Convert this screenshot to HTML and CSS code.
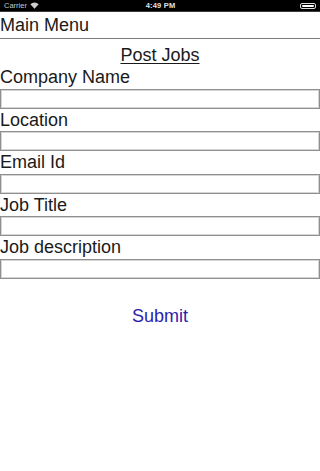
FILE: index.html
```html
<!DOCTYPE html>
<html>
<head>
<meta charset="utf-8">
<meta name="viewport" content="width=device-width, initial-scale=1">
<link rel="stylesheet" href="styles.css">
</head>
<body>
<div class="status">
  <div class="status-left">
    <span class="carrier">Carrier</span>
    <svg class="wifi" width="9" height="7" viewBox="0 0 9 7">
      <path d="M4.5 6.8 L0.3 2.3 A6 6 0 0 1 8.7 2.3 Z" fill="#cfcfcf"/>
    </svg>
  </div>
  <div class="status-time">4:49 PM</div>
  <div class="status-right">
    <div class="battery"><div class="battery-fill"></div></div>
  </div>
</div>
<div class="header">Main Menu</div>
<div class="title"><span class="title-link">Post Jobs</span></div>
<form class="form">
  <div class="field"><label class="label">Company Name</label><input class="input" type="text"></div>
  <div class="field"><label class="label">Location</label><input class="input" type="text"></div>
  <div class="field"><label class="label">Email Id</label><input class="input" type="text"></div>
  <div class="field"><label class="label">Job Title</label><input class="input" type="text"></div>
  <div class="field"><label class="label">Job description</label><input class="input" type="text"></div>
  <div class="submit-row"><span class="submit">Submit</span></div>
</form>
</body>
</html>
```
FILE: styles.css
```css
html, body {
  margin: 0;
  padding: 0;
  background: #ffffff;
  font-family: "Liberation Sans", Arial, sans-serif;
  color: #1a1a1a;
}
.status {
  height: 12px;
  background: #000000;
  display: flex;
  align-items: center;
  justify-content: space-between;
  padding: 0 3px 0 4px;
  font-size: 7.5px;
  line-height: 12px;
  border-bottom: 1px solid #3a3a3a;
  box-sizing: border-box;
}
.status-left {
  display: flex;
  align-items: center;
  gap: 3px;
  width: 60px;
}
.carrier {
  color: #c8c8c8;
}
.wifi {
  display: block;
}
.status-time {
  color: #e0e0e0;
  font-weight: bold;
  font-size: 7.5px;
  letter-spacing: 0.2px;
}
.status-right {
  width: 60px;
  display: flex;
  justify-content: flex-end;
}
.battery {
  width: 16px;
  height: 6px;
  border: 1px solid #dcdcdc;
  border-radius: 2px;
  box-sizing: border-box;
  padding: 1px;
  margin-right: 1px;
}
.battery-fill {
  width: 100%;
  height: 100%;
  background: #ffffff;
  border-radius: 1px;
}
.header {
  font-size: 18px;
  line-height: 20px;
  padding: 3px 0 3px 0;
  border-bottom: 1px solid #7a7a7a;
}
.title {
  margin-top: 5px;
  text-align: center;
  font-size: 18px;
  line-height: 22px;
}
.title-link {
  text-decoration: underline;
  text-underline-offset: 2px;
  text-decoration-thickness: 1px;
}
.form {
  display: flex;
  flex-direction: column;
  margin: 0;
}
.field {
  display: flex;
  flex-direction: column;
  height: 42.5px;
}
.label {
  font-size: 18px;
  line-height: 22.5px;
  height: 22.5px;
}
.input {
  display: block;
  box-sizing: border-box;
  width: 100%;
  height: 20px;
  margin: 0;
  padding: 0;
  border: 1px solid #8f8f8f;
  box-shadow: inset 0 0 0 1px #d6d6d6;
  background: #ffffff;
  outline: none;
}
.submit-row {
  margin-top: 26px;
  text-align: center;
  font-size: 18px;
  line-height: 22px;
}
.submit {
  color: #2a22ad;
}
```
